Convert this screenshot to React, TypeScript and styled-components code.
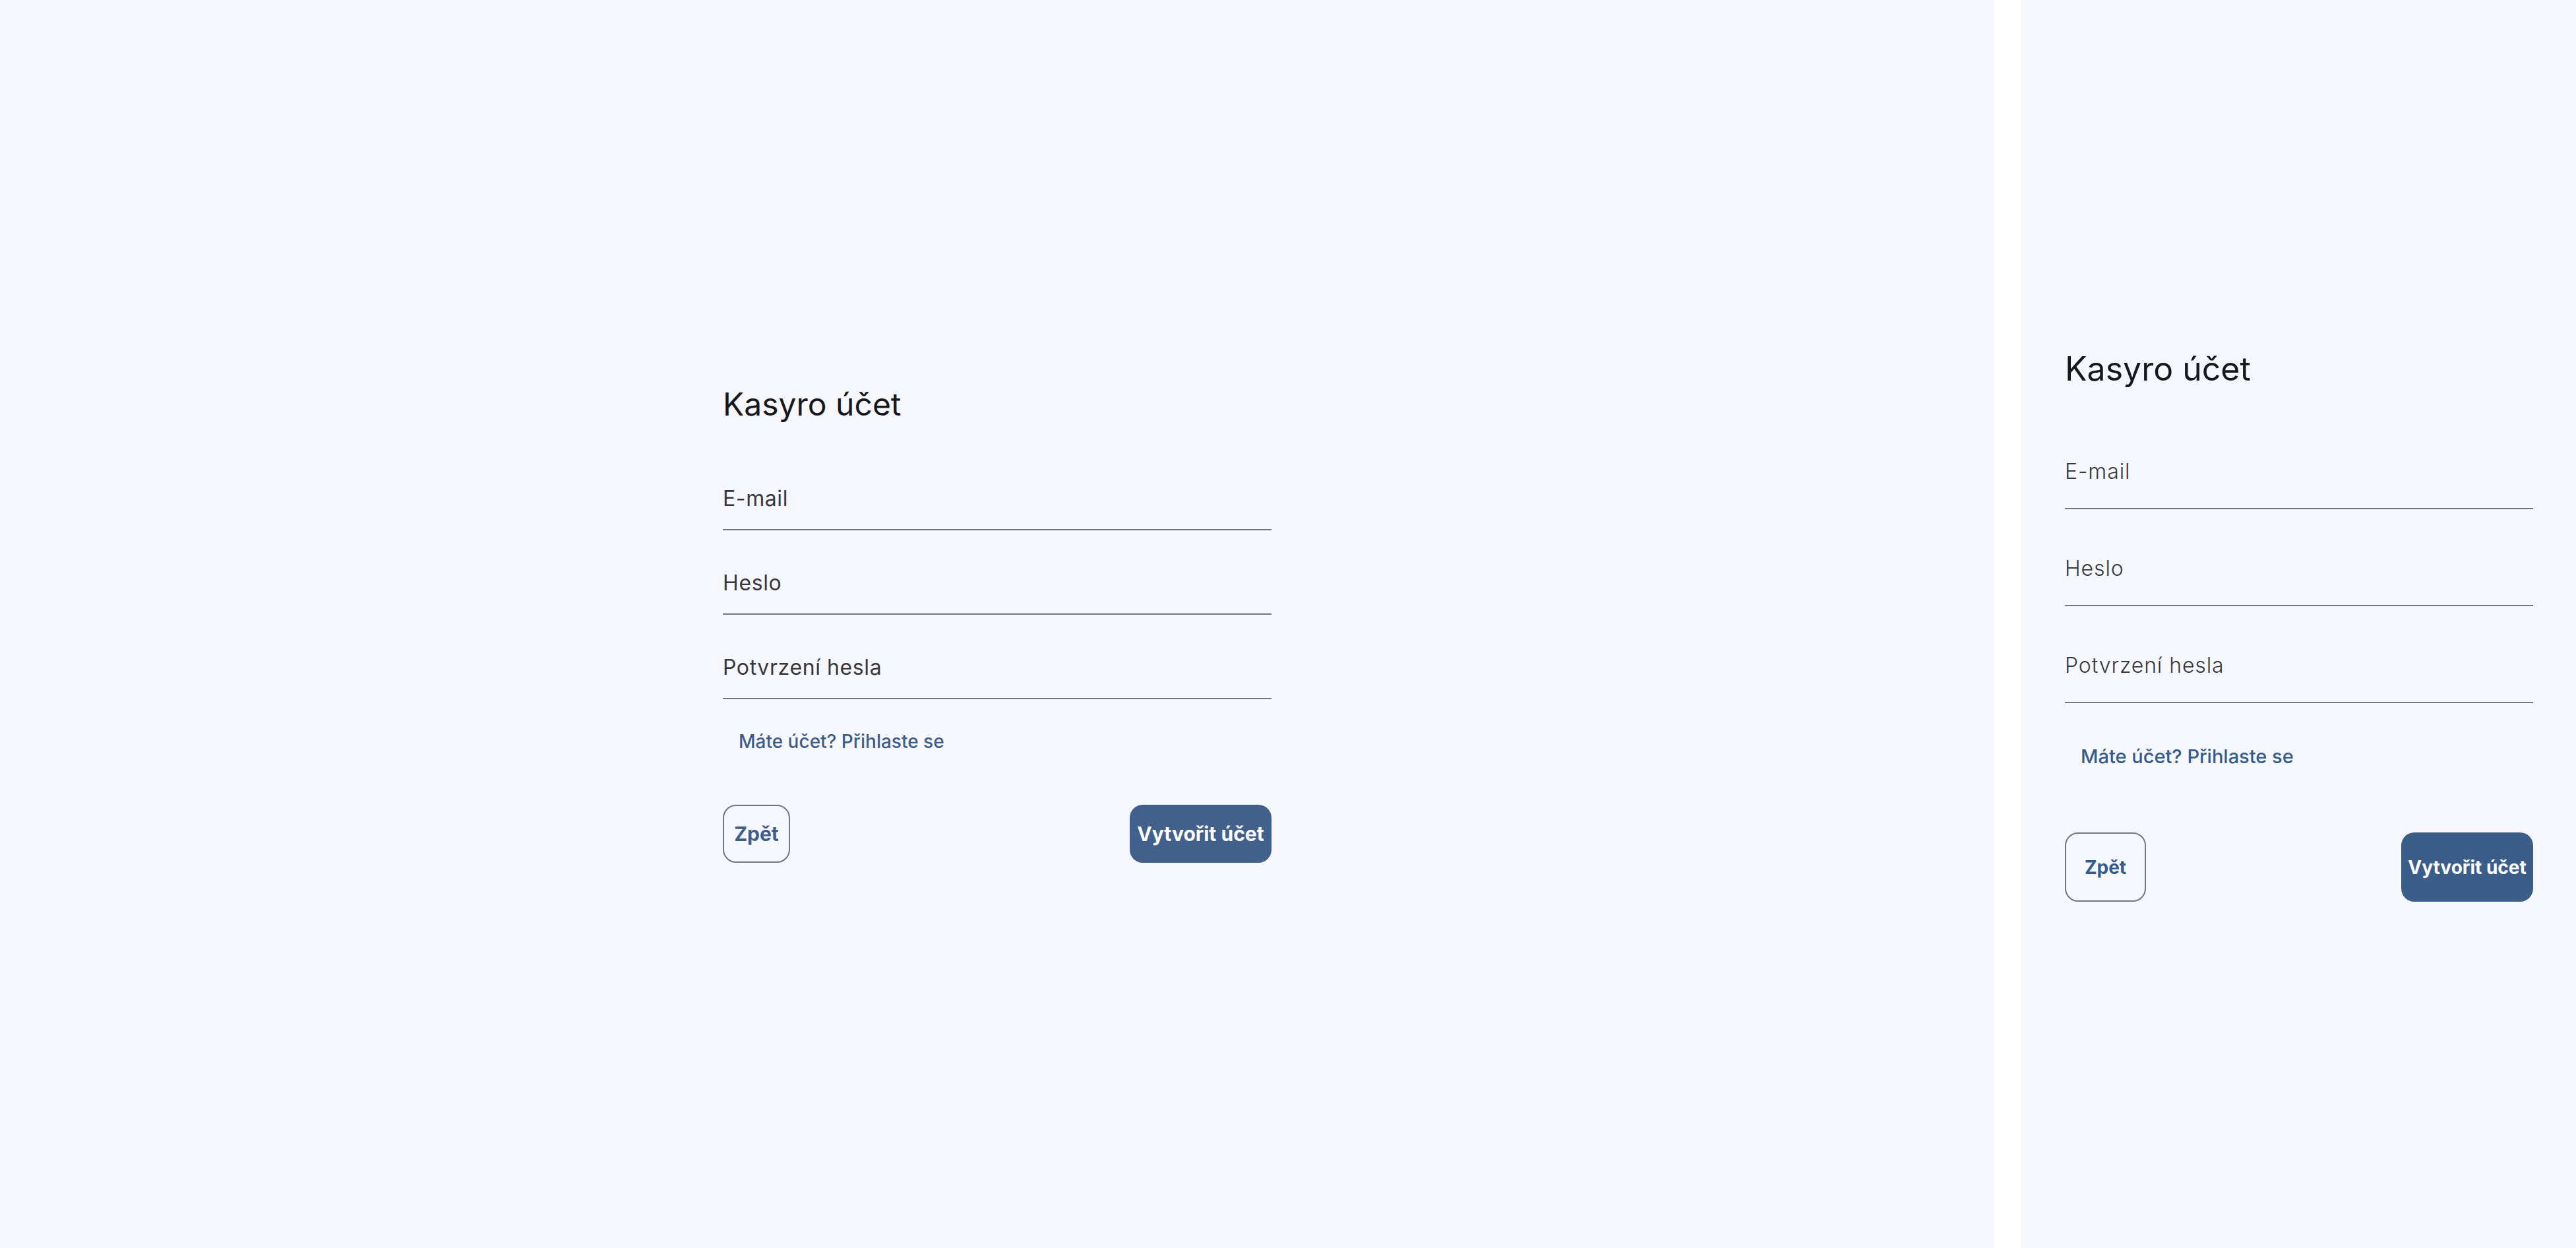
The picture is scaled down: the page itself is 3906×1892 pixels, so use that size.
import React, { useState } from "react";
import styled, { createGlobalStyle, css } from "styled-components";

const GlobalStyle = createGlobalStyle`
  html, body {
    margin: 0;
    padding: 0;
    background: #ffffff;
  }

  body {
    font-family: Inter, "Noto Sans", "Liberation Sans", sans-serif;
  }

  * {
    box-sizing: border-box;
  }
`;

interface Variant {
  $mobile?: boolean;
}

const fields = [
  { name: "email", label: "E-mail", type: "email" },
  { name: "password", label: "Heslo", type: "password" },
  { name: "confirm", label: "Potvrzení hesla", type: "password" },
];

const initialState = {
  email: "",
  password: "",
  confirm: "",
};

const RegisterForm = ({ $mobile }: Variant) => {
  const [values, setValues] = useState(initialState);

  const handleChange = (e: React.ChangeEvent<HTMLInputElement>) => {
    setValues({ ...values, [e.target.name]: e.target.value });
  };

  return (
    <Form $mobile={$mobile} onSubmit={(e) => e.preventDefault()}>
      <Title $mobile={$mobile}>Kasyro účet</Title>
      <Fields $mobile={$mobile}>
        {fields.map((field) => (
          <Input
            key={field.name}
            $mobile={$mobile}
            type={field.type}
            name={field.name}
            placeholder={field.label}
            value={values[field.name as keyof typeof values]}
            onChange={handleChange}
          />
        ))}
      </Fields>
      <LoginLink $mobile={$mobile} type="button">
        Máte účet? Přihlaste se
      </LoginLink>
      <Actions $mobile={$mobile}>
        <BackButton $mobile={$mobile} type="button">
          Zpět
        </BackButton>
        <SubmitButton $mobile={$mobile} type="submit">
          Vytvořit účet
        </SubmitButton>
      </Actions>
    </Form>
  );
};

const App = () => {
  return (
    <>
      <GlobalStyle />
      <Page>
        <Panel $width={3024}>
          <RegisterForm />
        </Panel>
        <Panel $width={842}>
          <RegisterForm $mobile />
        </Panel>
      </Page>
    </>
  );
};

export default App;

const Page = styled.main`
  display: flex;
  gap: 40px;
  width: 3906px;
  height: 1892px;
  background: #ffffff;
  overflow: hidden;
`;

const Panel = styled.section<{ $width: number }>`
  flex: 0 0 ${(p) => p.$width}px;
  display: flex;
  align-items: center;
  justify-content: center;
  background: #f7f8fd;
`;

const Form = styled.form<Variant>`
  display: flex;
  flex-direction: column;
  width: ${(p) => (p.$mobile ? "710px" : "832px")};
  margin-top: ${(p) => (p.$mobile ? "4px" : "0")};
  margin-left: ${(p) => (p.$mobile ? "2px" : "0")};
`;

const Title = styled.h1<Variant>`
  margin: 0;
  font-weight: 400;
  color: #17181c;
  font-size: ${(p) => (p.$mobile ? "50px" : "48px")};
  line-height: ${(p) => (p.$mobile ? "60px" : "58px")};
`;

const Fields = styled.div<Variant>`
  display: flex;
  flex-direction: column;
  gap: ${(p) => (p.$mobile ? "50px" : "46px")};
  margin-top: ${(p) => (p.$mobile ? "86px" : "80px")};
`;

const Input = styled.input<Variant>`
  display: block;
  width: 100%;
  border: none;
  border-bottom: 2px solid #74767c;
  border-radius: 0;
  background: transparent;
  outline: none;
  font-family: inherit;
  font-size: 32px;
  line-height: 40px;
  height: auto;
  color: #2b2c31;

  ${(p) =>
    p.$mobile
      ? css`
          padding: 20px 0 35px;
          font-weight: 300;
          letter-spacing: 0.9px;
        `
      : css`
          padding: 14px 0 26px;
          font-weight: 400;
          letter-spacing: 0.6px;
        `}

  &::placeholder {
    color: #37383f;
    opacity: 1;
  }
`;

const LoginLink = styled.button<Variant>`
  align-self: flex-start;
  margin: ${(p) => (p.$mobile ? "63px 0 0 24px" : "46px 0 0 24px")};
  padding: 0;
  border: none;
  background: none;
  cursor: pointer;
  font-family: inherit;
  font-size: ${(p) => (p.$mobile ? "29px" : "28px")};
  line-height: 36px;
  font-weight: 500;
  color: ${(p) => (p.$mobile ? "#345b8c" : "#3e5d8a")};
`;

const Actions = styled.div<Variant>`
  display: flex;
  justify-content: space-between;
  align-items: center;
  margin-top: ${(p) => (p.$mobile ? "97px" : "78px")};
`;

const buttonBase = css<Variant>`
  height: ${(p) => (p.$mobile ? "105px" : "88px")};
  border-radius: 20px;
  font-family: inherit;
  font-size: ${(p) => (p.$mobile ? "28px" : "30px")};
  font-weight: 700;
  cursor: pointer;
`;

const BackButton = styled.button<Variant>`
  ${buttonBase}
  width: ${(p) => (p.$mobile ? "123px" : "102px")};
  padding: 0;
  background: transparent;
  border: 2px solid #74767c;
  color: ${(p) => (p.$mobile ? "#345b8c" : "#3f5e8c")};
`;

const SubmitButton = styled.button<Variant>`
  ${buttonBase}
  width: ${(p) => (p.$mobile ? "200px" : "215px")};
  padding: 0;
  border: none;
  background: ${(p) => (p.$mobile ? "#3a5d8a" : "#42608c")};
  color: #ffffff;
`;
